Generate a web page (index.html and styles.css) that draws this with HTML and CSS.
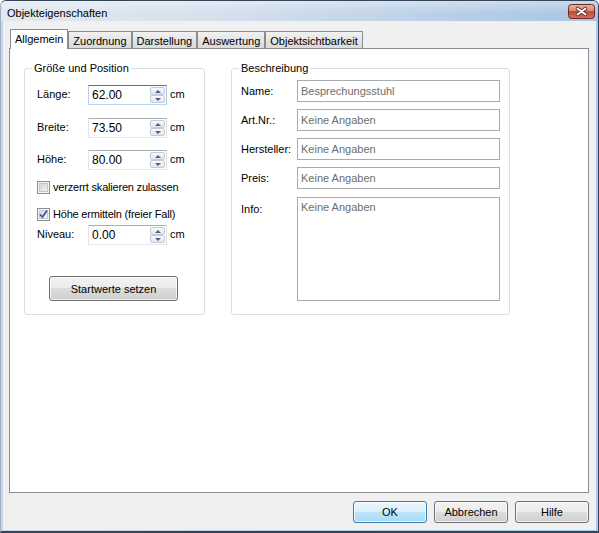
FILE: index.html
```html
<!DOCTYPE html>
<html lang="de">
<head>
<meta charset="utf-8">
<title>Objekteigenschaften</title>
<link rel="stylesheet" href="styles.css">
</head>
<body>
<div class="window">
  <div class="titlebar">
    <span class="title">Objekteigenschaften</span>
    <svg class="close" width="27" height="15" viewBox="0 0 27 15">
      <defs>
        <linearGradient id="cg" x1="0" y1="0" x2="0" y2="1">
          <stop offset="0" stop-color="#eab3a6"/>
          <stop offset="0.45" stop-color="#d98a78"/>
          <stop offset="0.5" stop-color="#c44a30"/>
          <stop offset="1" stop-color="#d5745a"/>
        </linearGradient>
      </defs>
      <rect x="0.5" y="0.5" width="26" height="14" rx="3" fill="url(#cg)" stroke="#6a2b27"/>
      <path d="M9.5 4.5 L17.5 10.5 M17.5 4.5 L9.5 10.5" stroke="#6b2a22" stroke-width="3.6" stroke-linecap="round"/>
      <path d="M9.5 4.5 L17.5 10.5 M17.5 4.5 L9.5 10.5" stroke="#fff" stroke-width="1.9" stroke-linecap="round"/>
    </svg>
  </div>
  <div class="client">
    <div class="tabs">
      <div class="tab active">Allgemein</div>
      <div class="tab">Zuordnung</div>
      <div class="tab">Darstellung</div>
      <div class="tab">Auswertung</div>
      <div class="tab">Objektsichtbarkeit</div>
    </div>
    <div class="panel">
      <div class="group g1">
        <span class="legend">Größe und Position</span>
        <div class="row">
          <span class="lbl">Länge:</span>
          <div class="num focused"><span class="num-val">62.00</span><div class="spin"><div class="sb up"></div><div class="sb down"></div></div></div>
          <span class="unit">cm</span>
        </div>
        <div class="row r2">
          <span class="lbl">Breite:</span>
          <div class="num"><span class="num-val">73.50</span><div class="spin"><div class="sb up"></div><div class="sb down"></div></div></div>
          <span class="unit">cm</span>
        </div>
        <div class="row r3">
          <span class="lbl">Höhe:</span>
          <div class="num"><span class="num-val">80.00</span><div class="spin"><div class="sb up"></div><div class="sb down"></div></div></div>
          <span class="unit">cm</span>
        </div>
        <div class="check c1">
          <svg width="13" height="13" viewBox="0 0 13 13">
            <defs>
              <linearGradient id="cb1" x1="0" y1="0" x2="1" y2="1">
                <stop offset="0" stop-color="#cbcfd5"/>
                <stop offset="1" stop-color="#f6f6f6"/>
              </linearGradient>
            </defs>
            <rect x="0.5" y="0.5" width="12" height="12" fill="#f4f4f4" stroke="#8e8f8f"/>
            <rect x="2.5" y="2.5" width="8" height="8" fill="url(#cb1)" stroke="#c2c6cc"/>
          </svg>
          <span class="ctext">verzerrt skalieren zulassen</span>
        </div>
        <div class="check c2">
          <svg width="13" height="13" viewBox="0 0 13 13">
            <defs>
              <linearGradient id="cb2" x1="0" y1="0" x2="1" y2="1">
                <stop offset="0" stop-color="#d3d7dd"/>
                <stop offset="1" stop-color="#f8f8f8"/>
              </linearGradient>
            </defs>
            <rect x="0.5" y="0.5" width="12" height="12" fill="#f4f4f4" stroke="#8e8f8f"/>
            <rect x="2.5" y="2.5" width="8" height="8" fill="url(#cb2)" stroke="#c8ccd2"/>
            <path d="M3 6.3 L5.4 9 L10 2.6" fill="none" stroke="#445f9c" stroke-width="1.8"/>
          </svg>
          <span class="ctext">Höhe ermitteln (freier Fall)</span>
        </div>
        <div class="row r4">
          <span class="lbl">Niveau:</span>
          <div class="num"><span class="num-val">0.00</span><div class="spin"><div class="sb up"></div><div class="sb down"></div></div></div>
          <span class="unit">cm</span>
        </div>
        <button class="btn start">Startwerte setzen</button>
      </div>
      <div class="group g2">
        <span class="legend">Beschreibung</span>
        <div class="frow">
          <span class="flbl">Name:</span>
          <div class="field">Besprechungsstuhl</div>
        </div>
        <div class="frow">
          <span class="flbl">Art.Nr.:</span>
          <div class="field">Keine Angaben</div>
        </div>
        <div class="frow">
          <span class="flbl">Hersteller:</span>
          <div class="field">Keine Angaben</div>
        </div>
        <div class="frow">
          <span class="flbl">Preis:</span>
          <div class="field">Keine Angaben</div>
        </div>
        <div class="frow info">
          <span class="flbl">Info:</span>
          <div class="field area">Keine Angaben</div>
        </div>
      </div>
    </div>
    <div class="buttons">
      <button class="btn dlg default">OK</button>
      <button class="btn dlg">Abbrechen</button>
      <button class="btn dlg">Hilfe</button>
    </div>
  </div>
</div>
</body>
</html>
```

FILE: styles.css
```css
html, body {
  margin: 0;
  padding: 0;
  background: #ffffff;
}

body {
  font-family: "Liberation Sans", Arial, sans-serif;
  font-size: 11px;
  line-height: 13px;
  color: #000000;
}

.window {
  width: 599px;
  height: 533px;
  box-sizing: border-box;
  border: 1px solid #34455a;
  border-left-color: #9fb0c4;
  border-bottom-width: 2px;
  border-radius: 6px 6px 0 0;
  background: linear-gradient(to right, #c6d7ea, #a9c7e8);
  display: flex;
  flex-direction: column;
  overflow: hidden;
}

.titlebar {
  height: 20px;
  flex: none;
  display: flex;
  align-items: flex-start;
  padding: 0 3px 0 6px;
  background:
    linear-gradient(to bottom, rgba(255,255,255,0.35), rgba(255,255,255,0) 60%),
    linear-gradient(to right, #e1e8f0 0%, #d6e1ed 35%, #b9cfe7 75%, #aac5e4 100%);
}

.title {
  margin-top: 6px;
  font-size: 11px;
  color: #000;
}

.close {
  display: block;
  margin-left: auto;
  margin-top: 3px;
}

.client {
  flex: 1;
  margin: 0 2px 1px 2px;
  background: #f0f0f0;
  padding: 8px 7px 7px 6px;
  display: flex;
  flex-direction: column;
}

.tabs {
  display: flex;
  align-items: flex-end;
  height: 19px;
  padding-left: 1px;
  position: relative;
  z-index: 1;
}

.tab {
  height: 17px;
  box-sizing: border-box;
  border: 1px solid #898c95;
  border-bottom: none;
  padding: 3px 4px 0 4px;
  background: linear-gradient(#f2f2f2, #e6e6e6 45%, #dadada);
  white-space: nowrap;
}

.tab.active {
  height: 20px;
  margin-bottom: -1px;
  background: #ffffff;
}

.panel {
  flex: none;
  height: 445px;
  box-sizing: border-box;
  border: 1px solid #898c95;
  background: #ffffff;
  padding: 19px 0 0 14px;
  display: flex;
  align-items: flex-start;
}

.group {
  position: relative;
  box-sizing: border-box;
  border: 1px solid #d5dfe5;
  border-radius: 3px;
  height: 247px;
}

.legend {
  position: absolute;
  top: -7px;
  left: 7px;
  padding: 0 2px;
  background: #ffffff;
  white-space: nowrap;
}

.g1 {
  width: 181px;
  padding: 16px 0 0 12px;
}

.row {
  display: flex;
  align-items: center;
  height: 20px;
}

.r2 { margin-top: 13px; }
.r3 { margin-top: 12px; }
.r4 { margin-top: 4px; }

.lbl {
  width: 51px;
  flex: none;
  padding-bottom: 2px;
}

.num {
  width: 79px;
  height: 20px;
  box-sizing: border-box;
  border: 1px solid;
  border-color: #abadb3 #dbdfe6 #e3e9ef #e2e3ea;
  background: #ffffff;
  display: flex;
  align-items: stretch;
  font-size: 12px;
}

.num.focused {
  border-color: #3d7bad #a4c9e3 #b7d9ed #b5cfe7;
}

.num-val {
  flex: 1;
  align-self: center;
  padding-left: 3px;
  padding-top: 1px;
}

.spin {
  width: 15px;
  display: flex;
  flex-direction: column;
  padding: 1px 1px 1px 0;
}

.sb {
  flex: 1;
  box-sizing: border-box;
  border: 1px solid #c4cbd4;
  border-radius: 2px;
  background: linear-gradient(#f7f9fb, #e2e7ed);
  display: flex;
  align-items: center;
  justify-content: center;
}

.sb::after {
  content: "";
  width: 0;
  height: 0;
  border-left: 3px solid transparent;
  border-right: 3px solid transparent;
}

.sb.up::after {
  border-bottom: 3px solid #4f6283;
}

.sb.down::after {
  border-top: 3px solid #4f6283;
}

.unit {
  margin-left: 3px;
  padding-bottom: 2px;
}

.check {
  display: flex;
  align-items: center;
  height: 13px;
  gap: 3px;
  white-space: nowrap;
}

.ctext {
  letter-spacing: -0.2px;
}

.check svg { display: block; flex: none; }

.c1 { margin-top: 11px; }
.c2 { margin-top: 14px; }

.btn {
  font-family: inherit;
  font-size: 11px;
  color: #000;
  box-sizing: border-box;
  border: 1px solid #707070;
  border-radius: 3px;
  background: linear-gradient(#f2f2f2 0%, #ebebeb 49%, #dddddd 50%, #cfcfcf 100%);
  box-shadow: inset 0 0 0 1px rgba(255,255,255,0.7);
  padding: 0;
}

.start {
  display: block;
  width: 129px;
  height: 25px;
  margin: 31px 0 0 12px;
}

.g2 {
  width: 279px;
  margin-left: 26px;
  padding: 11px 0 0 9px;
}

.frow {
  display: flex;
  align-items: center;
  margin-bottom: 7px;
}

.flbl {
  width: 56px;
  flex: none;
}

.field {
  width: 203px;
  height: 22px;
  box-sizing: border-box;
  border: 1px solid #a9abb0;
  background: #ffffff;
  color: #6d6d6d;
  padding: 0 3px;
  display: flex;
  align-items: center;
  white-space: nowrap;
}

.frow.info {
  align-items: flex-start;
  margin-top: 8px;
  margin-bottom: 0;
}

.info .flbl {
  padding-top: 6px;
}

.field.area {
  height: 104px;
  align-items: flex-start;
  padding-top: 3px;
}

.buttons {
  display: flex;
  justify-content: flex-end;
  gap: 7px;
  margin-top: 8px;
}

.dlg {
  width: 74px;
  height: 22px;
}

.dlg.default {
  border-color: #3c7fb1;
  background: linear-gradient(#eaf6fd 0%, #d9f0fc 49%, #bee6fd 50%, #a7d9f5 100%);
}
```
